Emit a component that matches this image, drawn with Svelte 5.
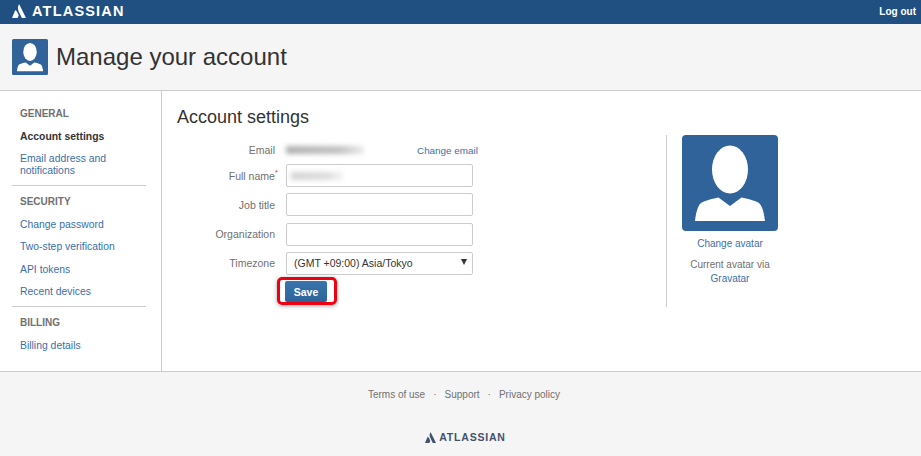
<script>
  const sections = [
    { title: 'GENERAL', links: [
      { label: 'Account settings', active: true },
      { label: 'Email address and notifications' }
    ] },
    { title: 'SECURITY', links: [
      { label: 'Change password' },
      { label: 'Two-step verification' },
      { label: 'API tokens' },
      { label: 'Recent devices' }
    ] },
    { title: 'BILLING', links: [{ label: 'Billing details' }] }
  ];
</script>

{#snippet mark(size)}
  <svg class="mark" width={size} height={size} viewBox="0 0 24 24" aria-hidden="true">
    <path d="M12 0.500c-2.400 4-2.600 8-.5 12.200L17 24H24L13 1.700C12.700 1 12.300 .7 12 .5z" />
    <path d="M6.800 11c-.5-.6-1.100-.5-1.500.2L0 24h9.500l2-4.500C10.600 16.200 9 13.200 6.800 11z" />
  </svg>
{/snippet}

{#snippet person()}
  <svg class="person" viewBox="0 0 96 96" aria-hidden="true">
    <rect width="96" height="96" rx="4" fill="#2f6399" />
    <ellipse cx="48" cy="34.500" rx="18" ry="24" fill="#fff" />
    <path d="M13 86c1-8 2.500-15 6-18 4-2.500 12-4.500 17.500-5.500L48 71l11.500-8.500c5.500 1 13.500 3 17.500 5.500 3.500 3 5 10 6 18z" fill="#fff" />
  </svg>
{/snippet}

<div class="page">
  <header class="topbar">
    <a class="logo" href="#top">
      {@render mark(14)}
      <span>ATLASSIAN</span>
    </a>
    <a class="logout" href="#top">Log out</a>
  </header>

  <div class="pagehead">
    <div class="headicon">{@render person()}</div>
    <h1>Manage your account</h1>
  </div>

  <main class="content">
    <nav class="sidebar">
      {#each sections as section, i}
        <div class="navgroup" class:ruled={i > 0}>
          <h3>{section.title}</h3>
          <ul>
            {#each section.links as link}
              <li><a href="#top" class:active={link.active}>{link.label}</a></li>
            {/each}
          </ul>
        </div>
      {/each}
    </nav>

    <section class="panel">
      <h2>Account settings</h2>
      <div class="columns">
        <form class="form" onsubmit={(e) => e.preventDefault()}>
          <div class="row emailrow">
            <span class="label">Email</span>
            <span class="blurred email"></span>
            <a class="change" href="#top">Change email</a>
          </div>
          <div class="row">
            <label class="label" for="fullname">Full name<sup>*</sup></label>
            <div class="inputwrap">
              <input id="fullname" type="text" />
              <span class="blurred name"></span>
            </div>
          </div>
          <div class="row">
            <label class="label" for="jobtitle">Job title</label>
            <input id="jobtitle" type="text" />
          </div>
          <div class="row">
            <label class="label" for="org">Organization</label>
            <input id="org" type="text" />
          </div>
          <div class="row">
            <label class="label" for="tz">Timezone</label>
            <div class="select" id="tz">
              <span>(GMT +09:00) Asia/Tokyo</span>
              <i class="arrow"></i>
            </div>
          </div>
          <div class="actions">
            <button type="submit">Save</button>
          </div>
        </form>

        <aside class="avatar">
          <div class="avatarimg">{@render person()}</div>
          <a class="changeavatar" href="#top">Change avatar</a>
          <p>Current avatar via <a href="#top">Gravatar</a></p>
        </aside>
      </div>
    </section>
  </main>

  <footer class="footer">
    <ul class="footlinks">
      <li><a href="#top">Terms of use</a></li>
      <li class="dot">·</li>
      <li><a href="#top">Support</a></li>
      <li class="dot">·</li>
      <li><a href="#top">Privacy policy</a></li>
    </ul>
    <div class="footlogo">
      {@render mark(11)}
      <span>ATLASSIAN</span>
    </div>
  </footer>
</div>

<style>
  :global(body) {
    margin: 0;
    background: #f5f5f5;
    font-family: "Liberation Sans", Arial, sans-serif;
    font-size: 11px;
    color: #333;
  }

  a {
    color: #3b6fa8;
    text-decoration: none;
  }

  .page {
    width: 921px;
    height: 456px;
    overflow: hidden;
    display: flex;
    flex-direction: column;
  }

  .topbar {
    height: 24px;
    flex: none;
    box-sizing: border-box;
    background: #205081;
    display: flex;
    align-items: center;
    justify-content: space-between;
    padding: 0 5px 2px 12px;
  }

  .logo {
    display: flex;
    align-items: center;
    gap: 6px;
    color: #fff;
    font-size: 14.500px;
    font-weight: 700;
    letter-spacing: 1.200px;
  }

  .logo .mark {
    fill: #fff;
  }

  .logout {
    color: #fff;
    font-size: 10px;
    font-weight: 700;
  }

  .pagehead {
    height: 66px;
    flex: none;
    border-bottom: 1px solid #ccc;
    display: flex;
    align-items: center;
    gap: 8px;
    padding-left: 12px;
  }

  .headicon {
    width: 36px;
    height: 36px;
  }

  .person {
    display: block;
    width: 100%;
    height: 100%;
  }

  h1 {
    margin: 0;
    font-size: 24px;
    font-weight: 400;
    color: #333;
  }

  .content {
    height: 280px;
    flex: none;
    background: #fff;
    border-bottom: 1px solid #ccc;
    display: flex;
  }

  .sidebar {
    width: 162px;
    flex: none;
    box-sizing: border-box;
    border-right: 1px solid #ccc;
    padding: 17px 15px 0 12px;
  }

  .navgroup.ruled {
    border-top: 1px solid #ccc;
    margin-top: 8px;
    padding-top: 10px;
  }

  h3 {
    margin: 0 0 11px 8px;
    font-size: 10px;
    line-height: 12px;
    font-weight: 700;
    color: #707070;
  }

  ul {
    list-style: none;
    margin: 0;
    padding: 0;
  }

  .sidebar li {
    padding-left: 8px;
    line-height: 12px;
    font-size: 10.400px;
    margin-bottom: 10.200px;
  }

  .sidebar li:last-child {
    margin-bottom: 0;
  }

  .sidebar a.active {
    color: #333;
    font-weight: 700;
  }

  .panel {
    flex: 1;
    padding: 15px 0 0 15px;
  }

  h2 {
    margin: 0 0 7px;
    font-size: 18px;
    line-height: 22px;
    font-weight: 400;
    color: #333;
  }

  .columns {
    display: flex;
  }

  .form {
    width: 489px;
    height: 167px;
    padding-top: 5px;
    flex: none;
    border-right: 1px solid #ccc;
  }

  .row {
    display: flex;
    align-items: center;
    height: 23px;
    margin-bottom: 6.300px;
  }

  .emailrow {
    height: 20px;
    margin-bottom: 4px;
  }

  .label {
    width: 98px;
    flex: none;
    margin-right: 11px;
    text-align: right;
    font-size: 10.500px;
    color: #707070;
  }

  .label sup {
    color: #d04437;
    font-size: 8px;
    line-height: 0;
    margin-right: -3px;
  }

  input,
  .select {
    width: 187px;
    height: 23px;
    box-sizing: border-box;
    border: 1px solid #ccc;
    border-radius: 2px;
    background: #fff;
    margin: 0;
    padding: 0;
  }

  .inputwrap {
    position: relative;
    height: 23px;
  }

  .blurred {
    display: block;
    background: linear-gradient(90deg, #b0b0b0, #c0c0c0 70%, #ececec);
    filter: blur(2.500px);
  }

  .email {
    width: 78px;
    height: 8px;
  }

  .name {
    position: absolute;
    left: 5px;
    top: 8px;
    width: 52px;
    height: 8px;
    background: linear-gradient(90deg, #d4d4d4, #dcdcdc 70%, #f4f4f4);
  }

  .change {
    margin-left: 53px;
    font-size: 9.900px;
  }

  .select {
    display: flex;
    align-items: center;
    justify-content: space-between;
    padding: 0 5px 0 7px;
    font-size: 10.500px;
    color: #333;
  }

  .arrow {
    width: 0;
    height: 0;
    border-left: 3.500px solid transparent;
    border-right: 3.500px solid transparent;
    border-top: 6px solid #333;
    margin-bottom: 3px;
  }

  .actions {
    margin: 3px 0 0 108px;
  }

  button {
    position: relative;
    display: block;
    width: 42px;
    height: 21px;
    padding: 0;
    border: 0;
    border-radius: 2px;
    background: linear-gradient(#3a74ae, #2c6399);
    color: #fff;
    font: 700 10.500px "Liberation Sans", Arial, sans-serif;
  }

  /* red annotation round the button */
  button::after {
    content: "";
    position: absolute;
    left: -8px;
    top: -4px;
    width: 54px;
    height: 22px;
    border: 3px solid #ee0010;
    border-radius: 5px;
    box-shadow: 0 1px 4px rgba(0, 0, 0, 0.35);
  }

  .avatar {
    width: 96px;
    margin-left: 15px;
    text-align: center;
    font-size: 10px;
    color: #707070;
  }

  .avatarimg {
    width: 96px;
    height: 96px;
    margin-bottom: 7px;
  }

  .changeavatar {
    display: block;
    line-height: 12px;
    margin-bottom: 8px;
  }

  .avatar p {
    margin: 0;
    line-height: 14px;
  }

  .footer {
    flex: 1;
    background: #f5f5f5;
    display: flex;
    flex-direction: column;
    align-items: center;
  }

  .footlinks {
    display: flex;
    gap: 8px;
    margin: 17px 0 0 7px;
    font-size: 10px;
    line-height: 12px;
  }

  .footlinks a,
  .dot {
    color: #707070;
  }

  .footlogo {
    display: flex;
    align-items: center;
    gap: 3px;
    margin: 30px 0 0 10px;
    color: #42526e;
    font-size: 10.500px;
    font-weight: 700;
    letter-spacing: 0.800px;
  }

  .footlogo .mark {
    fill: #42526e;
  }
</style>
